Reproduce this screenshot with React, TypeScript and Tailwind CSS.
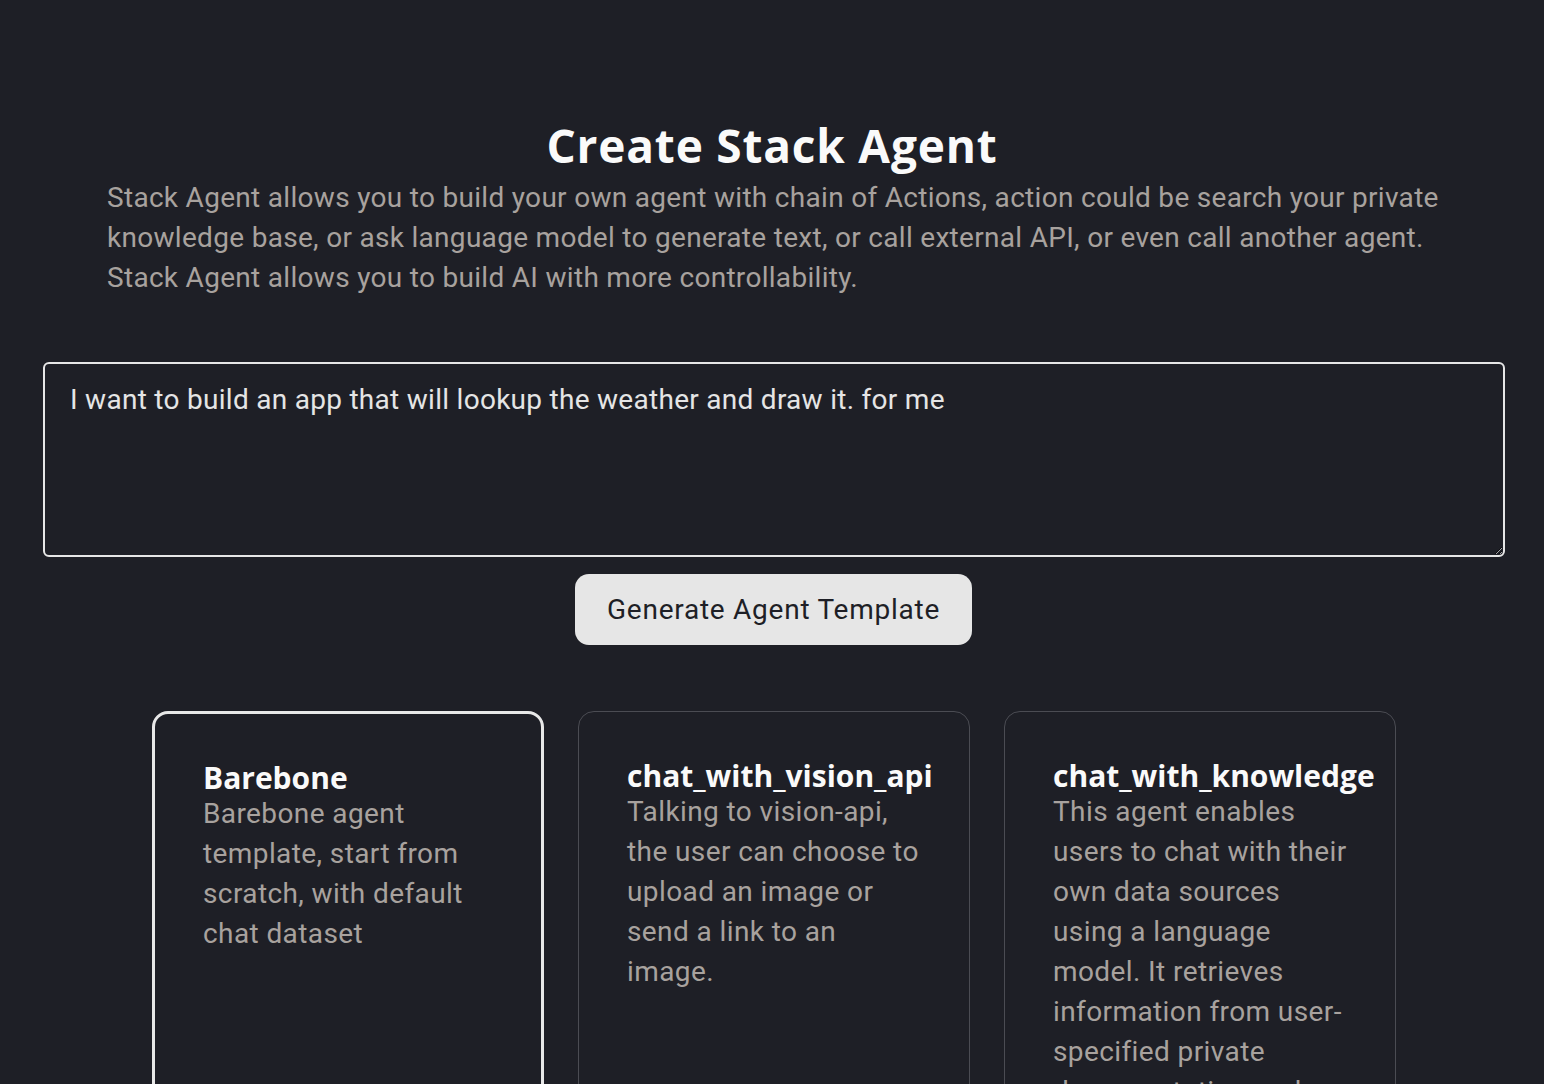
import { useEffect, useRef } from "react";

const templates = [
  {
    name: "Barebone",
    desc: "Barebone agent template, start from scratch, with default chat dataset",
    selected: true,
  },
  {
    name: "chat_with_vision_api",
    desc: "Talking to vision-api, the user can choose to upload an image or send a link to an image.",
    selected: false,
  },
  {
    name: "chat_with_knowledge",
    desc: "This agent enables users to chat with their own data sources using a language model. It retrieves information from user-specified private documentation and knowledge bases to answer questions.",
    selected: false,
  },
];

const prompt = "I want to build an app that will lookup the weather and draw it. for me";

export default function App() {
  const inputRef = useRef<HTMLTextAreaElement>(null);

  useEffect(() => {
    const el = inputRef.current;
    if (!el) return;
    const pos = prompt.indexOf("lookup");
    el.focus();
    el.setSelectionRange(pos, pos);
  }, []);

  return (
    <div className="min-h-screen bg-[#1e1f26] pt-[117px] pb-20 font-['Roboto',sans-serif]">
      {/* Header */}
      <h1 className="text-center font-['Open_Sans',sans-serif] text-[46px] leading-[56px] font-bold tracking-[0.8px] text-[#fafafa]">
        Create Stack Agent
      </h1>
      <p className="mt-[5px] pl-[107px] pr-[60px] text-[28px] leading-[40px] tracking-[0.3px] text-[#a8a29e]">
        Stack Agent allows you to build your own agent with chain of Actions, action could be search your private
        knowledge base, or ask language model to generate text, or call external API, or even call another agent.
        Stack Agent allows you to build AI with more controllability.
      </p>

      {/* Prompt */}
      <div className="mt-[64px] pl-[43px]">
        <textarea
          ref={inputRef}
          className="block w-[1462px] h-[195px] rounded-md border-2 border-[#e6e6e6] bg-transparent px-[25px] py-[16px] text-[28px] leading-[40px] tracking-[0.28px] text-[#e5e5e5] caret-[#e5e5e5] outline-none"
          defaultValue={prompt}
        />
      </div>
      <div className="mt-[17px] flex justify-center pl-[3px]">
        <button className="h-[71px] rounded-[14px] bg-[#e6e6e6] px-8 text-[28px] tracking-[0.75px] text-[#1e1f26]">
          Generate Agent Template
        </button>
      </div>

      {/* Templates */}
      <div className="mt-[66px] flex justify-center gap-[34px] pl-[4px]">
        {templates.map((t) => (
          <div
            key={t.name}
            className={
              t.selected
                ? "w-[392px] min-h-[460px] rounded-2xl border-[3px] border-[#e8e8e8] px-12 pt-12"
                : "w-[392px] min-h-[460px] rounded-2xl border border-[#4b4c53] px-12 pt-12"
            }
          >
            <div className="whitespace-nowrap font-['Open_Sans',sans-serif] text-[30px] leading-[32px] font-bold text-[#fafafa]">
              {t.name}
            </div>
            <div className="text-[28px] leading-[40px] tracking-[0.4px] text-[#a8a29e]">{t.desc}</div>
          </div>
        ))}
      </div>
    </div>
  );
}
